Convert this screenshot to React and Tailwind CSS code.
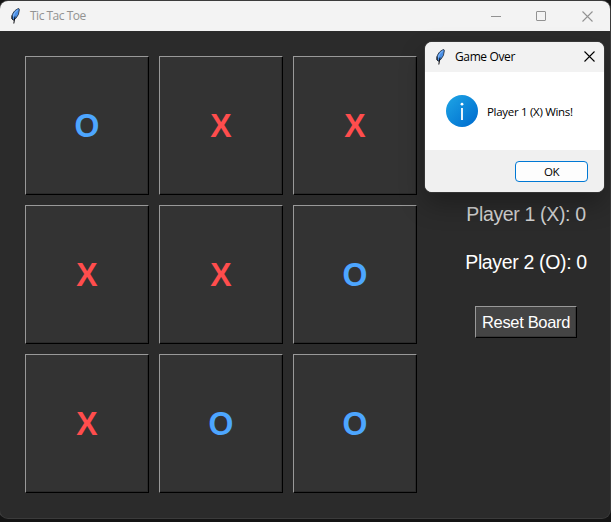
const board = ['O', 'X', 'X', 'X', 'X', 'O', 'X', 'O', 'O'];

function Feather() {
  return (
    <svg className="h-4 w-[9px] shrink-0" viewBox="0 0 9 16">
      <path d="M7.9 0.6C5.2 0.9 2 4 1.1 7.5L0.9 10.5L2.4 12L4.8 10.4L7.4 6.5L8.4 1.5Z" fill="#4a8fe6" stroke="#1c2430" strokeWidth="0.8" />
      <path d="M6.9 1.8L3.5 5L2.2 8.8" fill="none" stroke="#8fc0fb" strokeWidth="0.9" />
      <path d="M1 7.5L1.1 11L2.6 12.3" fill="none" stroke="#05070a" strokeWidth="0.9" />
      <path d="M4 8.5L2.8 15.5" fill="none" stroke="#0b0d12" strokeWidth="1" />
    </svg>
  );
}

function Cross({ className }) {
  return (
    <svg className={className} viewBox="0 0 11 11" fill="none" stroke="currentColor">
      <path d="M0.5 0.5L10.5 10.5M10.5 0.5L0.5 10.5" strokeWidth="1.1" />
    </svg>
  );
}

function Cell({ mark }) {
  return (
    <button className="h-[139px] w-[124px] border border-t-[#999] border-r-black border-b-black border-l-[#999] bg-[#333] shadow-[inset_-1px_-1px_0_#292929]">
      <span className={`block scale-y-[1.04] pt-px text-center text-[32px] leading-[36px] font-bold ${mark === 'X' ? 'text-[#ff4d4d]' : 'text-[#4da6ff]'}`}>{mark}</span>
    </button>
  );
}

function Dialog() {
  return (
    <div className="absolute top-[42px] left-[425px] flex h-[150px] w-[179px] flex-col overflow-hidden rounded-[7px] bg-white font-['Open_Sans','Noto_Sans',sans-serif] text-black">
      <div className="flex h-[30px] shrink-0 items-center bg-[#f2f2f2] pr-[9px] pl-[11px]">
        <Feather />
        <span className="ml-[10px] text-[12px] tracking-[-0.38px] whitespace-nowrap">Game Over</span>
        <Cross className="mb-[2px] ml-auto size-[11px]" />
      </div>
      <div className="flex h-[78px] shrink-0 items-center pl-[21px]">
        <svg className="size-8 shrink-0" viewBox="0 0 32 32">
          <defs>
            <linearGradient id="info" x1="0" y1="0" x2="1" y2="1">
              <stop offset="0.1" stopColor="#1ba0e3" />
              <stop offset="0.9" stopColor="#006fd0" />
            </linearGradient>
          </defs>
          <circle cx="16" cy="16" r="16" fill="url(#info)" />
          <circle cx="16" cy="9.2" r="1.4" fill="#fff" />
          <path d="M16 13V25" stroke="#fff" strokeWidth="1.8" />
        </svg>
        <span className="ml-[9px] pt-[2px] text-[11.5px] tracking-[-0.3px] whitespace-nowrap">Player 1 (X) Wins!</span>
      </div>
      <div className="flex h-[42px] shrink-0 items-start justify-end bg-[#f0f0f0] pt-[11px] pr-[16px]">
        <button className="flex h-[21px] w-[73px] items-center justify-center rounded-[4px] border border-[#0078d4] bg-[#fdfdfd] text-[11.5px] tracking-[-0.4px]">OK</button>
      </div>
    </div>
  );
}

export default function App() {
  return (
    <div className="relative h-[522px] w-[611px] overflow-hidden bg-[#141414] pt-px font-['Liberation_Sans',Arial,sans-serif]">
      <div className="flex h-[517px] w-[610px] flex-col overflow-hidden rounded-[8px] bg-[#2b2b2b] shadow-[0_0_0_1px_#3b3b3b]">
        <header className="flex h-[30px] shrink-0 items-center bg-[#f3f3f3] pr-[17px] pl-[11px] text-[#929292]">
          <Feather />
          <span className="ml-[10px] font-['Open_Sans','Noto_Sans',sans-serif] text-[12px] tracking-[-0.5px]">Tic Tac Toe</span>
          <div className="ml-auto flex items-center">
            <span className="h-px w-[10px] bg-[#929292]" />
            <span className="ml-[35px] size-[10px] rounded-[1px] border border-[#929292]" />
            <Cross className="ml-[36px] size-[11px]" />
          </div>
        </header>
        <main className="flex grow pt-[25px] pl-[25px]">
          <div className="grid h-fit grid-cols-3 gap-[10px]">
            {board.map((mark, i) => <Cell key={i} mark={mark} />)}
          </div>
          <aside className="ml-[25px] flex w-[168px] flex-col items-center pt-[147px] text-white">
            <p className="text-[19.5px] leading-[22px] tracking-[-0.35px] whitespace-nowrap text-[#d2d2d2]">Player 1 (X): 0</p>
            <p className="mt-[26px] text-[19.5px] leading-[22px] tracking-[-0.35px] whitespace-nowrap">Player 2 (O): 0</p>
            <button className="mt-[33px] h-8 w-[102px] border border-t-[#999] border-r-black border-b-black border-l-[#999] bg-[#444] text-[16.5px] leading-[18px] tracking-[-0.33px] whitespace-nowrap shadow-[inset_-1px_-1px_0_#363636]">Reset Board</button>
          </aside>
        </main>
      </div>
      <div className="pointer-events-none absolute top-[42px] left-[425px] h-[150px] w-[179px] rounded-[7px] shadow-[0_0_0_1px_rgba(70,70,70,0.55),0_12px_26px_rgba(0,0,0,0.3)]" />
      <Dialog />
    </div>
  );
}
